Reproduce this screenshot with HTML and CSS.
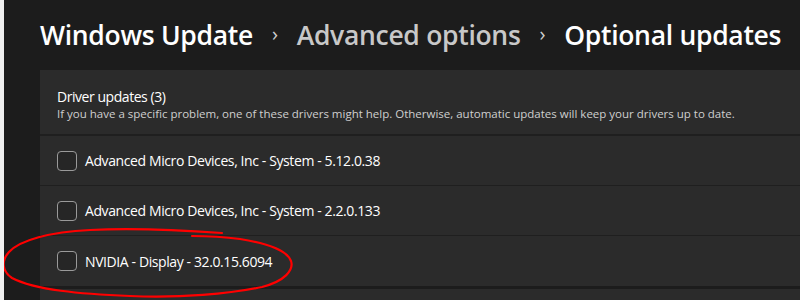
FILE: index.html
```html
<!DOCTYPE html>
<html>
<head>
<meta charset="utf-8">
<link rel="stylesheet" href="styles.css">
</head>
<body>
<div class="window">
  <h1 class="crumbs">
    <span class="crumb">Windows Update</span>
    <span class="sep">›</span>
    <span class="crumb dim">Advanced options</span>
    <span class="sep">›</span>
    <span class="crumb">Optional updates</span>
  </h1>
  <div class="card">
    <div class="card-head">
      <div class="title">Driver updates (3)</div>
      <div class="desc">If you have a specific problem, one of these drivers might help. Otherwise, automatic updates will keep your drivers up to date.</div>
    </div>
    <div class="row"><span class="box"></span><span class="label">Advanced Micro Devices, Inc - System - 5.12.0.38</span></div>
    <div class="row"><span class="box"></span><span class="label">Advanced Micro Devices, Inc - System - 2.2.0.133</span></div>
    <div class="row"><span class="box"></span><span class="label">NVIDIA - Display - 32.0.15.6094</span></div>
  </div>
  <div class="card next"></div>
  <svg class="circle" width="800" height="300" viewBox="0 0 800 300">
    <path d="M222 233 C180 230 130 228 90 230 C50 232 20 240 9 252 C1 261 2 271 12 278 C35 290 80 294 130 296 C180 298 230 294 262 287 C285 281 294 270 291 261 C287 250 265 243 240 239 C225 237 205 236 192 236" fill="none" stroke="#ff0000" stroke-width="2.2" stroke-linecap="round"/>
  </svg>
</div>
</body>
</html>
```
FILE: styles.css
```css
html, body {
  margin: 0;
  padding: 0;
}
body {
  background: #f0f0f0;
  width: 800px;
  height: 300px;
  overflow: hidden;
  font-family: "Open Sans", "Noto Sans", sans-serif;
}
.window {
  position: relative;
  margin-left: 4px;
  height: 300px;
  background: #1c1c1c;
  padding-left: 36px;
  overflow: hidden;
}
.crumbs {
  margin: 0;
  padding-top: 13px;
  height: 56px;
  box-sizing: border-box;
  display: flex;
  align-items: center;
  white-space: nowrap;
  font-size: 26.5px;
  font-weight: 600;
  line-height: 38px;
  color: #ffffff;
  letter-spacing: -0.3px;
}
.crumb.dim {
  color: #c8c8c8;
}
.sep {
  font-size: 20px;
  font-weight: 400;
  line-height: 38px;
  color: #d0d0d0;
  margin: 0 19px 0 19px;
  position: relative;
  top: -1px;
}
.card {
  margin-top: 14px;
  background: #2b2b2b;
  width: 800px;
}
.card-head {
  padding: 17px 16px 17px 17px;
  border-bottom: 2px solid #1f1f1f;
  height: 66px;
  box-sizing: border-box;
}
.title {
  font-size: 14px;
  line-height: 19px;
  color: #ffffff;
  letter-spacing: -0.45px;
}
.desc {
  font-size: 11.5px;
  line-height: 16px;
  color: #cfcfcf;
  white-space: nowrap;
}
.row {
  display: flex;
  align-items: center;
  height: 49px;
  padding-left: 17px;
  border-bottom: 1px solid #1f1f1f;
}
.row:last-child {
  height: 50px;
  border-bottom: none;
}
.box {
  width: 18px;
  height: 18px;
  border: 1px solid #9a9a9a;
  border-radius: 4px;
  background: #262626;
  margin-right: 8px;
  flex: none;
}
.label {
  font-size: 14px;
  letter-spacing: -0.4px;
  color: #ffffff;
  white-space: nowrap;
}
.next {
  margin-top: 3px;
  height: 20px;
}
.circle {
  position: absolute;
  left: -4px;
  top: 0;
  pointer-events: none;
}
```
